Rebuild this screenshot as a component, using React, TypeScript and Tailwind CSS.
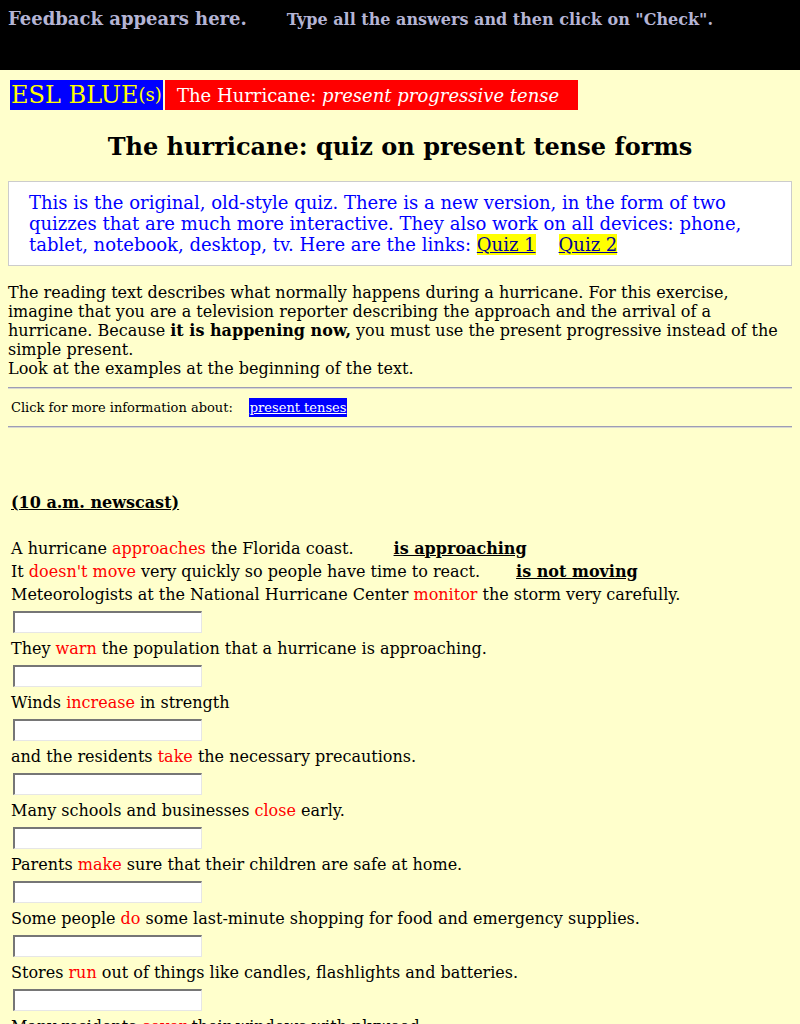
import React from "react";

type Item = { before: string; verb: string; after: string };

const items: Item[] = [
  { before: "Meteorologists at the National Hurricane Center ", verb: "monitor", after: " the storm very carefully." },
  { before: "They ", verb: "warn", after: " the population that a hurricane is approaching." },
  { before: "Winds ", verb: "increase", after: " in strength" },
  { before: "and the residents ", verb: "take", after: " the necessary precautions." },
  { before: "Many schools and businesses ", verb: "close", after: " early." },
  { before: "Parents ", verb: "make", after: " sure that their children are safe at home." },
  { before: "Some people ", verb: "do", after: " some last-minute shopping for food and emergency supplies." },
  { before: "Stores ", verb: "run", after: " out of things like candles, flashlights and batteries." },
  { before: "Many residents ", verb: "cover", after: " their windows with plywood." },
  { before: "Others ", verb: "leave", after: " their homes and go to shelters." },
];

function Answer() {
  return (
    <input
      type="text"
      className="ml-[2px] block h-[22px] w-[189px] border-t-2 border-l-2 border-r border-b border-t-[#767676] border-l-[#767676] border-r-[#e6e6e6] border-b-[#e6e6e6] bg-white px-1 text-[14px] outline-none"
    />
  );
}

export default function App() {
  return (
    <div className="min-h-screen bg-[#ffffcc] text-black" style={{ fontFamily: '"DejaVu Serif", serif' }}>
      {/* Feedback bar */}
      <div className="flex h-[70px] items-start bg-black px-2 pt-[7px] font-bold text-[#b4b4d4]">
        <span className="text-[18px] leading-[24px]">Feedback appears here.</span>
        <span className="ml-[40px] pt-[1px] text-[16px] leading-[24px]">Type all the answers and then click on "Check".</span>
      </div>

      <div className="px-2">
        {/* Title bar */}
        <div className="mt-[10px] ml-[2px] flex h-[30px]">
          <div className="flex w-[153px] items-center bg-[#0000ff] pl-[1px] text-[#ffff00]">
            <span className="text-[24px] leading-none">ESL BLUE</span>
            <span className="text-[18px] leading-none">(s)</span>
          </div>
          <div className="ml-[2px] flex w-[413px] items-center bg-[#ff0000] pl-[12px] text-[18px] text-white">
            The Hurricane:&nbsp;<i>present progressive tense</i>
          </div>
        </div>

        <h1 className="mt-[21px] text-center text-[24px] font-bold leading-[32px]">
          The hurricane: quiz on present tense forms
        </h1>

        {/* Notice box */}
        <div className="mt-[18px] border border-[#cccccc] bg-white py-[10px] pl-[20px] pr-4 text-[18px] leading-[21px] text-[#0000ff]">
          This is the original, old-style quiz. There is a new version, in the form of two quizzes that are much more interactive. They also work on all devices: phone, tablet, notebook, desktop, tv. Here are the links:{" "}
          <a href="#" className="bg-[#ffff00] text-[#000099] underline">Quiz 1</a>
          <span className="inline-block w-[23px]" />
          <a href="#" className="bg-[#ffff00] text-[#000099] underline">Quiz 2</a>
        </div>

        {/* Intro */}
        <p className="mt-[17px] text-[16px] leading-[19px]">
          The reading text describes what normally happens during a hurricane. For this exercise, imagine that you are a television reporter describing the approach and the arrival of a hurricane. Because <b>it is happening now,</b> you must use the present progressive instead of the simple present.
          <br />
          Look at the examples at the beginning of the text.
        </p>

        <div className="mt-[9px] border-t border-b border-t-[#9d9db5] border-b-[#d8d8d0]" />
        <div className="flex h-[37px] items-center pl-[3px] text-[13px]">
          <span>Click for more information about:</span>
          <a href="#" className="ml-[16px] bg-[#0000ff] px-[1px] text-white underline">present tenses</a>
        </div>
        <div className="border-t border-b border-t-[#9d9db5] border-b-[#d8d8d0]" />

        {/* Quiz */}
        <div className="pl-[3px] text-[16px]">
          <div className="mt-[63px] font-bold underline leading-[23px]">(10 a.m. newscast)</div>

          <div className="mt-[23px] leading-[23px]">
            A hurricane <span className="text-[#ff0000]">approaches</span> the Florida coast.
            <b className="ml-[40px] underline">is approaching</b>
          </div>
          <div className="leading-[23px]">
            It <span className="text-[#ff0000]">doesn't move</span> very quickly so people have time to react.
            <b className="ml-[36px] underline">is not moving</b>
          </div>

          <div className="flex flex-col">
            {items.map((it) => (
              <div key={it.verb} className="flex flex-col">
                <div className="leading-[23px]">
                  {it.before}
                  <span className="text-[#ff0000]">{it.verb}</span>
                  {it.after}
                </div>
                <div className="py-[4.5px]">
                  <Answer />
                </div>
              </div>
            ))}
          </div>
        </div>
      </div>
    </div>
  );
}
